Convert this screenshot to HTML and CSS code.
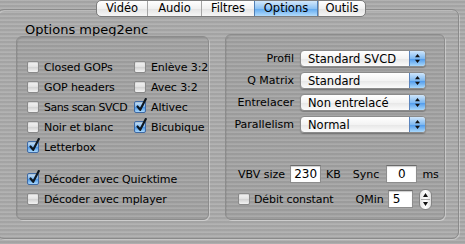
FILE: index.html
```html
<!DOCTYPE html>
<html lang="fr">
<head>
    <meta charset="UTF-8">
    <title>Options mpeg2enc</title>
    <link rel="stylesheet" href="styles.css">
</head>
<body>
    <div class="tabview">
        <div class="tabs">
            <div class="tab">Vidéo</div>
            <div class="tab">Audio</div>
            <div class="tab">Filtres</div>
            <div class="tab active">Options</div>
            <div class="tab">Outils</div>
        </div>

        <div class="titre">Options mpeg2enc</div>

        <div class="groupes">
            <div class="groupe gauche">
                <div class="grille">
                    <label class="case"><span class="cb"></span><span class="txt">Closed GOPs</span></label>
                    <label class="case"><span class="cb"></span><span class="txt">Enlève 3:2</span></label>
                    <label class="case"><span class="cb"></span><span class="txt">GOP headers</span></label>
                    <label class="case"><span class="cb"></span><span class="txt">Avec 3:2</span></label>
                    <label class="case"><span class="cb"></span><span class="txt serre">Sans scan SVCD</span></label>
                    <label class="case"><span class="cb on"></span><span class="txt">Altivec</span></label>
                    <label class="case"><span class="cb"></span><span class="txt">Noir et blanc</span></label>
                    <label class="case"><span class="cb on"></span><span class="txt">Bicubique</span></label>
                    <label class="case"><span class="cb on"></span><span class="txt">Letterbox</span></label>
                </div>
                <div class="decodeurs">
                    <label class="case"><span class="cb on"></span><span class="txt">Décoder avec Quicktime</span></label>
                    <label class="case"><span class="cb"></span><span class="txt">Décoder avec mplayer</span></label>
                </div>
            </div>

            <div class="groupe droite">
                <div class="formulaire">
                    <span class="lib">Profil</span>
                    <div class="popup"><span>Standard SVCD</span><span class="fleches"></span></div>
                    <span class="lib">Q Matrix</span>
                    <div class="popup"><span>Standard</span><span class="fleches"></span></div>
                    <span class="lib">Entrelacer</span>
                    <div class="popup"><span>Non entrelacé</span><span class="fleches"></span></div>
                    <span class="lib">Parallelism</span>
                    <div class="popup"><span>Normal</span><span class="fleches"></span></div>
                </div>

                <div class="ligne vbv">
                    <span>VBV size</span>
                    <span class="champ c-vbv">230</span>
                    <span class="unite">KB</span>
                    <span class="sync">Sync</span>
                    <span class="champ c-sync">0</span>
                    <span class="unite">ms</span>
                </div>
                <div class="ligne debit">
                    <label class="case"><span class="cb"></span><span class="txt">Débit constant</span></label>
                    <span class="qmin">QMin</span>
                    <span class="champ c-qmin">5</span>
                    <span class="stepper"></span>
                </div>
            </div>
        </div>
    </div>
</body>
</html>
```

FILE: styles.css
```css
html, body {
    margin: 0;
    width: 465px;
    height: 244px;
    overflow: hidden;
}

body {
    font-family: "DejaVu Sans", "Liberation Sans", sans-serif;
    font-size: 11px;
    color: #000;
    background-color: #aaaaaa;
    background-image: repeating-linear-gradient(180deg,
        rgba(255, 255, 255, 0.10) 0px, rgba(255, 255, 255, 0.10) 1px,
        rgba(0, 0, 0, 0.04) 1px, rgba(0, 0, 0, 0.04) 3px,
        rgba(255, 255, 255, 0.05) 3px, rgba(255, 255, 255, 0.05) 4px);
}

.tabview {
    margin: 9px 0 0 -3px;
    width: 462px;
    height: 230px;
    box-sizing: border-box;
    border: 1px solid #8a8a8a;
    border-radius: 7px;
    box-shadow: inset 1px 1px 0 rgba(255, 255, 255, 0.25), 1px 1px 0 rgba(255, 255, 255, 0.3);
}

.tabs {
    display: flex;
    width: 270px;
    height: 17px;
    margin: -10px 0 0 98px;
    border: 1px solid #7c7c7c;
    border-radius: 5px;
    overflow: hidden;
    background: linear-gradient(#ffffff, #f1f1f1 50%, #e3e3e3 51%, #f6f6f6);
    box-sizing: border-box;
}

.tab {
    display: flex;
    align-items: center;
    justify-content: center;
    border-left: 1px solid #a5a5a5;
    font-size: 11.5px;
    line-height: 15px;
}

.tab:first-child { border-left: none; width: 50px; }
.tab:nth-child(2) { width: 53px; }
.tab:nth-child(3) { width: 52px; }
.tab:nth-child(4) { width: 62px; }
.tab:nth-child(5) { flex: 1; }

.tab.active {
    background: linear-gradient(#d3e8fb, #8ec3f4 50%, #5ea8ef 51%, #b4dcfb);
    border-left-color: #4f7fb6;
    border-right: 1px solid #4f7fb6;
}

.titre {
    margin: 5px 0 0 27px;
    font-size: 13px;
    line-height: 16px;
    height: 16px;
}

.groupes {
    display: flex;
    align-items: flex-end;
    gap: 16px;
    margin: -4px 0 0 18px;
}

.groupe {
    box-sizing: border-box;
    border: 1px solid #8c8c8c;
    border-radius: 6px;
    background: rgba(0, 0, 0, 0.045);
    box-shadow: inset 1px 1px 0 rgba(0, 0, 0, 0.06), 1px 1px 0 rgba(255, 255, 255, 0.35);
}

.gauche {
    width: 193px;
    height: 184px;
    padding: 20px 0 0 10px;
}

.droite {
    width: 220px;
    height: 186px;
    padding: 15px 0 0 0;
}

.grille {
    display: grid;
    grid-template-columns: 107px 74px;
    grid-auto-rows: 20px;
}

.case {
    display: flex;
    align-items: center;
    height: 20px;
    white-space: nowrap;
}

.case .txt {
    margin-left: 5px;
    font-size: 11px;
    letter-spacing: -0.1px;
}

.case .txt.serre {
    letter-spacing: -0.45px;
}

.cb {
    flex: none;
    width: 12px;
    height: 12px;
    box-sizing: border-box;
    border: 1px solid #8a8a8a;
    border-radius: 2px;
    background: linear-gradient(#f6f6f6, #e0e0e0 50%, #d2d2d2 51%, #f2f2f2);
    box-shadow: inset 0 1px 1px rgba(0, 0, 0, 0.15);
    position: relative;
}

.cb.on {
    border-color: #3f6aa5;
    background: linear-gradient(#cfe6fb, #79b6f0 50%, #4a97ea 51%, #a8d7fb);
}

.cb.on::after {
    content: "";
    position: absolute;
    left: 1px;
    top: -4px;
    width: 11px;
    height: 14px;
    background: url("data:image/svg+xml,%3Csvg xmlns='http://www.w3.org/2000/svg' width='11' height='14'%3E%3Cpath d='M1.5 8.5 L4.2 11.8 L9.8 1' fill='none' stroke='%23101820' stroke-width='2.2' stroke-linecap='round' stroke-linejoin='round'/%3E%3C/svg%3E") no-repeat;
}

.decodeurs {
    margin-top: 12px;
}

.formulaire {
    display: grid;
    grid-template-columns: 68px 126px;
    column-gap: 6px;
    row-gap: 5px;
    align-items: center;
}

.lib {
    text-align: right;
    font-size: 11px;
}

.popup {
    display: flex;
    align-items: center;
    height: 17px;
    box-sizing: border-box;
    border: 1px solid #8b8b8b;
    border-radius: 4px;
    overflow: hidden;
    background: linear-gradient(#ffffff, #f3f3f3 50%, #e6e6e6 51%, #fbfbfb);
    box-shadow: 0 1px 1px rgba(0, 0, 0, 0.25);
    font-size: 11.5px;
}

.popup span:first-child {
    flex: 1;
    padding-left: 7px;
}

.fleches {
    width: 15px;
    height: 100%;
    border-left: 1px solid #5a84bd;
    background:
        url("data:image/svg+xml,%3Csvg xmlns='http://www.w3.org/2000/svg' width='15' height='15'%3E%3Cpath d='M7.5 3 L10 6.3 L5 6.3 Z M7.5 12 L10 8.7 L5 8.7 Z' fill='%23111'/%3E%3C/svg%3E") no-repeat center,
        linear-gradient(#cfe6fb, #7fb9f1 50%, #4b97ea 51%, #a9d8fb);
}

.ligne {
    display: flex;
    align-items: center;
    white-space: nowrap;
}

.vbv {
    margin: 32px 0 0 12px;
    height: 18px;
}

.champ {
    box-sizing: border-box;
    height: 18px;
    line-height: 16px;
    background: #fff;
    border: 1px solid #8d8d8d;
    border-top-color: #6a6a6a;
    box-shadow: inset 0 1px 1px rgba(0, 0, 0, 0.2);
    font-size: 12px;
}

.c-vbv {
    width: 31px;
    margin-left: 5px;
    text-align: center;
}

.c-sync {
    width: 31px;
    margin-left: 7px;
    text-align: center;
}

.unite {
    margin-left: 5px;
}

.sync {
    margin-left: 12px;
}

.debit {
    margin: 5px 0 0 12px;
    height: 22px;
}

.debit .case .txt {
    margin-left: 4px;
}

.qmin {
    margin-left: 22px;
}

.c-qmin {
    width: 25px;
    margin-left: 4px;
    padding-left: 4px;
}

.stepper {
    width: 13px;
    height: 21px;
    margin-left: 6px;
    box-sizing: border-box;
    border: 1px solid #858585;
    border-radius: 6px;
    background:
        url("data:image/svg+xml,%3Csvg xmlns='http://www.w3.org/2000/svg' width='11' height='19'%3E%3Cpath d='M5.5 3 L8 7 L3 7 Z M5.5 16 L8 12 L3 12 Z' fill='%23111'/%3E%3Cline x1='1' y1='9.5' x2='10' y2='9.5' stroke='%23aaa' stroke-width='1'/%3E%3C/svg%3E") no-repeat center,
        linear-gradient(90deg, #e4e4e4, #ffffff 50%, #e0e0e0);
}
```
